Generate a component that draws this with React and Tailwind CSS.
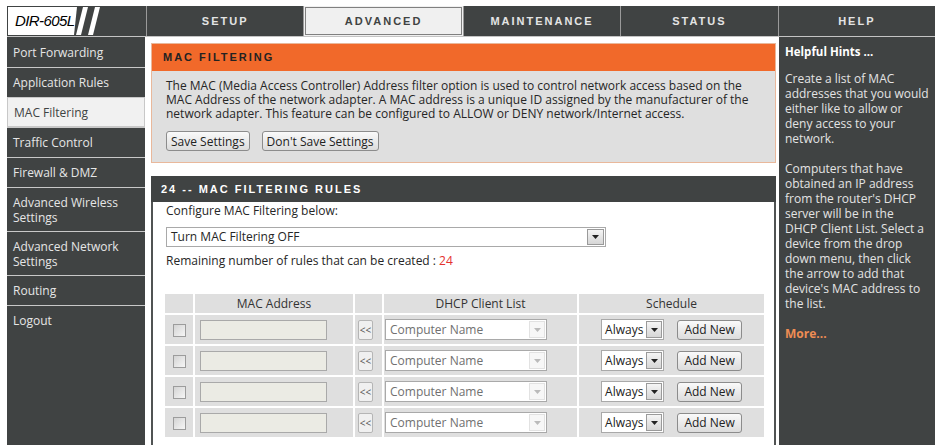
import React from "react";

const tabs = ["SETUP", "ADVANCED", "MAINTENANCE", "STATUS", "HELP"];

const navItems = [
  { label: "Port Forwarding" },
  { label: "Application Rules" },
  { label: "MAC Filtering", active: true },
  { label: "Traffic Control" },
  { label: "Firewall & DMZ" },
  { label: ["Advanced Wireless", "Settings"] },
  { label: ["Advanced Network", "Settings"] },
  { label: "Routing" },
  { label: "Logout" },
];

const hintsA = ["Create a list of MAC", "addresses that you would", "either like to allow or", "deny access to your", "network."];
const hintsB = [
  "Computers that have",
  "obtained an IP address",
  "from the router's DHCP",
  "server will be in the",
  "DHCP Client List. Select a",
  "device from the drop",
  "down menu, then click",
  "the arrow to add that",
  "device's MAC address to",
  "the list.",
];

const capsFont = "font-['Liberation_Sans',Arial,sans-serif] font-bold text-[11px] tracking-[2px]";

function Logo() {
  return (
    <div className="relative w-[139px] h-full">
      <svg width="139" height="30" className="absolute inset-0">
        <polygon points="1,1 70,1 67,29 1,29" fill="#ffffff" />
        <polygon points="76,1 81,1 74,29 69,29" fill="#ffffff" />
        <polygon points="88,1 93,1 86,29 81,29" fill="#ffffff" />
      </svg>
      <span className="absolute left-[8px] top-[5px] text-[15px] leading-[20px] italic tracking-[-0.6px] text-black font-['Liberation_Sans',Arial,sans-serif]">
        DIR-605L
      </span>
    </div>
  );
}

function Arrow({ dark = true }) {
  return (
    <svg width="7" height="4" viewBox="0 0 7 4">
      <polygon points="0,0 7,0 3.5,4" fill={dark ? "#222" : "#bbb"} />
    </svg>
  );
}

function RuleRow() {
  return (
    <tr className="h-[29px]">
      <td className="bg-[#dfdfdf] text-center">
        <span className="inline-block w-[13px] h-[13px] border border-[#9c9c9c] bg-gradient-to-br from-[#d4d4d4] to-[#f6f6f6] align-middle" />
      </td>
      <td className="bg-[#dfdfdf] pl-[5px]">
        <div className="w-[127px] h-[20px] border border-[#a9a9a9] bg-[#ebebe4]" />
      </td>
      <td className="bg-[#dfdfdf] pl-[3px]">
        <div className="w-[15px] h-[20px] border border-[#b5b5b5] rounded-[2px] bg-[#f0f0f0] text-[10px] leading-[18px] text-[#555] text-center">
          &lt;&lt;
        </div>
      </td>
      <td className="bg-[#dfdfdf] pl-[1px]">
        <div className="w-[162px] h-[21px] border border-[#a9a9a9] bg-white flex items-center justify-between pl-[4px] pr-[1px]">
          <span className="text-[12px] text-[#707070]">Computer Name</span>
          <span className="w-[16px] h-[17px] border border-[#e2e2e2] bg-[#f7f7f7] flex items-center justify-center">
            <Arrow dark={false} />
          </span>
        </div>
      </td>
      <td className="bg-[#dfdfdf]">
        <div className="flex items-center justify-center gap-[13px]">
          <div className="h-[21px] border border-[#a9a9a9] bg-white flex items-center pl-[3px] pr-[1px]">
            <span className="text-[12px] text-[#222] pr-[3px]">Always</span>
            <span className="w-[16px] h-[17px] border border-[#9a9a9a] bg-gradient-to-b from-[#f5f5f5] to-[#d6d6d6] flex items-center justify-center">
              <Arrow />
            </span>
          </div>
          <button className="h-[20px] px-[6px] border border-[#8c8c8c] rounded-[3px] bg-gradient-to-b from-[#fafafa] to-[#dcdcdc] text-[12px] leading-[17px] text-[#222]">
            Add New
          </button>
        </div>
      </td>
    </tr>
  );
}

export default function App() {
  return (
    <div className="w-[937px] h-[445px] overflow-hidden bg-white pt-[6px] pl-[7px] font-['Open_Sans','Noto_Sans',sans-serif] text-[12px]">
      <div className="w-[928px]">
        {/* top tabs */}
        <div className="flex h-[30px] bg-[#404343]">
          <Logo />
          {tabs.map((t) =>
            t === "ADVANCED" ? (
              <div key={t} className="flex-1 border-l border-[#9a9a9a] bg-[#f0f0f0] p-px">
                <div className={`h-full border border-[#808080] flex items-center justify-center text-[#404343] ${capsFont}`}>
                  {t}
                </div>
              </div>
            ) : (
              <div
                key={t}
                className={`flex-1 border-l border-[#9a9a9a] flex items-center justify-center text-[#e4e4e4] ${capsFont}`}
              >
                {t}
              </div>
            )
          )}
        </div>
        <div className="h-px bg-[#c4c4c4]" />

        <div className="flex h-[409px]">
          {/* left nav */}
          <div className="w-[138px] bg-[#404343] flex flex-col">
            {navItems.map((item, i) => {
              const two = Array.isArray(item.label);
              return (
                <div
                  key={i}
                  className={`${two ? "h-[44px]" : "h-[30px]"} ${
                    i > 0 ? "border-t border-[#c8c8c8]" : ""
                  } ${
                    item.active
                      ? "bg-[#f1f1f1] border border-[#9a9a9a] text-[#404343]"
                      : "text-[#e6e6e6]"
                  } flex flex-col justify-center px-[6px] leading-[15px] whitespace-nowrap`}
                >
                  {two ? (
                    <>
                      <span>{item.label[0]}</span>
                      <span>{item.label[1]}</span>
                    </>
                  ) : (
                    <span>{item.label}</span>
                  )}
                </div>
              );
            })}
          </div>

          {/* main */}
          <div className="w-[634px] pt-[6px] pl-[6px] pr-[3px]">
            <div className="border border-[#e9b89b] bg-[#dfdfdf]">
              <div className={`h-[27px] bg-[#f1692a] flex items-center pl-[11px] text-[#222] ${capsFont}`}>
                MAC FILTERING
              </div>
              <div className="pl-[14px] pr-[8px] pt-[8px] pb-[11px] text-[#262626]">
                <p className="leading-[14px] whitespace-nowrap">
                  The MAC (Media Access Controller) Address filter option is used to control network access based on the
                  <br />
                  MAC Address of the network adapter. A MAC address is a unique ID assigned by the manufacturer of the
                  <br />
                  network adapter. This feature can be configured to ALLOW or DENY network/Internet access.
                </p>
                <div className="flex gap-[12px] mt-[10px]">
                  <button className="h-[20px] px-[4px] border border-[#8c8c8c] rounded-[3px] bg-gradient-to-b from-[#fafafa] to-[#dcdcdc] text-[12px] leading-[17px] text-[#222]">
                    Save Settings
                  </button>
                  <button className="h-[20px] px-[4px] border border-[#8c8c8c] rounded-[3px] bg-gradient-to-b from-[#fafafa] to-[#dcdcdc] text-[12px] leading-[17px] text-[#222]">
                    Don't Save Settings
                  </button>
                </div>
              </div>
            </div>

            <div className="mt-[13px]">
              <div className={`h-[26px] bg-[#404343] flex items-center pl-[10px] text-white ${capsFont}`}>
                24 -- MAC FILTERING RULES
              </div>
              <div className="h-[300px] border-x-2 border-[#505353] bg-white pl-[13px] text-[#262626]">
                <div className="leading-[17px]">Configure MAC Filtering below:</div>
                <div className="mt-[8px] w-[440px] h-[20px] border border-[#a9a9a9] bg-white flex items-center justify-between pl-[4px] pr-[1px]">
                  <span>Turn MAC Filtering OFF</span>
                  <span className="w-[17px] h-[16px] border border-[#9a9a9a] bg-gradient-to-b from-[#f5f5f5] to-[#d6d6d6] flex items-center justify-center">
                    <Arrow />
                  </span>
                </div>
                <div className="mt-[6px] leading-[15px]">
                  Remaining number of rules that can be created : <span className="text-[#e4312e]">24</span>
                </div>
                <table className="mt-[24px] -ml-[3px] border-separate border-spacing-0.5 text-[12px]">
                  <colgroup>
                    <col className="w-[28px]" />
                    <col className="w-[158px]" />
                    <col className="w-[27px]" />
                    <col className="w-[193px]" />
                    <col className="w-[185px]" />
                  </colgroup>
                  <thead>
                    <tr className="h-[19px]">
                      <th className="bg-[#dfdfdf]" />
                      <th className="bg-[#dfdfdf] font-normal text-[#333]">MAC Address</th>
                      <th className="bg-[#dfdfdf]" />
                      <th className="bg-[#dfdfdf] font-normal text-[#333]">DHCP Client List</th>
                      <th className="bg-[#dfdfdf] font-normal text-[#333]">Schedule</th>
                    </tr>
                  </thead>
                  <tbody>
                    <RuleRow />
                    <RuleRow />
                    <RuleRow />
                    <RuleRow />
                  </tbody>
                </table>
              </div>
            </div>
          </div>

          {/* help */}
          <div className="flex-1 bg-[#404343] pl-[6px] pt-[8px] text-[#e4e4e4] leading-[15px] whitespace-nowrap">
            <div className="font-bold text-white text-[11.5px] leading-[14px]">Helpful Hints ...</div>
            <p className="mt-[12px]">
              {hintsA.map((l, i) => (
                <span key={i} className="block">{l}</span>
              ))}
            </p>
            <p className="mt-[15px]">
              {hintsB.map((l, i) => (
                <span key={i} className="block">{l}</span>
              ))}
            </p>
            <p className="mt-[15px] font-bold text-[#ee8d54]">More...</p>
          </div>
        </div>
      </div>
    </div>
  );
}
